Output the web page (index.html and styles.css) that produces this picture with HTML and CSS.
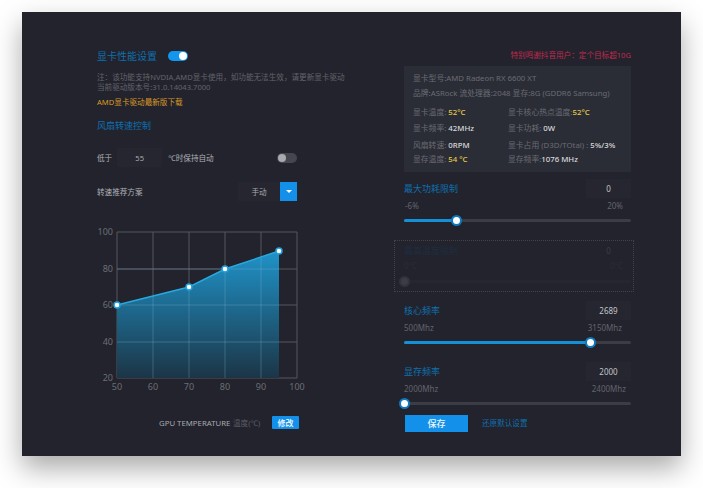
FILE: index.html
```html
<!DOCTYPE html>
<html lang="zh-CN">
<head>
<meta charset="utf-8">
<title>显卡性能设置</title>
<link rel="stylesheet" href="styles.css">
</head>
<body>
<main class="panel">
  <section class="left">
    <div class="title-row">
      <h1 class="heading heading-lg">显卡性能设置</h1>
      <span class="toggle toggle-on"></span>
    </div>
    <p class="note">注：该功能支持NVDIA,AMD显卡使用，如功能无法生效，请更新显卡驱动<br>当前驱动版本号:31.0.14043.7000</p>
    <a class="download">AMD显卡驱动最新版下载</a>
    <h2 class="heading fan-title">风扇转速控制</h2>
    <div class="row auto-row">
      <span class="row-label">低于</span>
      <span class="field field-temp">55</span>
      <span class="row-label">℃时保持自动</span>
      <span class="toggle toggle-off"></span>
    </div>
    <div class="row plan-row">
      <span class="row-label">转速推荐方案</span>
      <span class="select">
        <span class="select-value">手动</span>
        <span class="select-btn"><i class="caret"></i></span>
      </span>
    </div>
    <svg class="chart" width="210" height="170" viewBox="97 225 210 170">
      <defs>
        <linearGradient id="area" gradientUnits="userSpaceOnUse" x1="0" y1="251" x2="0" y2="378">
          <stop offset="0" stop-color="#1f93c9"/>
          <stop offset="1" stop-color="#1c3546"/>
        </linearGradient>
      </defs>
      <g class="grid">
        <path d="M117 232H297M117 269H297M117 305H297M117 342H297M117 378H297"/>
        <path d="M117 232V378M153 232V378M189 232V378M225 232V378M261 232V378M297 232V378"/>
      </g>
      <path class="area" d="M117 305L189 287L225 269L279 251V378H117Z"/>
      <g class="grid grid-over">
        <path d="M117 269H279M117 305H279M117 342H279"/>
        <path d="M153 296V378M189 287V378M225 269V378M261 258V378"/>
      </g>
      <path class="line" d="M117 305L189 287L225 269L279 251"/>
      <g class="dots">
        <circle cx="117" cy="305" r="3"/>
        <circle cx="189" cy="287" r="3"/>
        <circle cx="225" cy="269" r="3"/>
        <circle cx="279" cy="251" r="3"/>
      </g>
      <g class="ticks ticks-y">
        <text x="113" y="235">100</text>
        <text x="113" y="272">80</text>
        <text x="113" y="308">60</text>
        <text x="113" y="345">40</text>
        <text x="113" y="381">20</text>
      </g>
      <g class="ticks ticks-x">
        <text x="117" y="390">50</text>
        <text x="153" y="390">60</text>
        <text x="189" y="390">70</text>
        <text x="225" y="390">80</text>
        <text x="261" y="390">90</text>
        <text x="297" y="390">100</text>
      </g>
    </svg>
    <div class="chart-foot">
      <span class="axis-name">GPU TEMPERATURE</span>
      <span class="axis-unit">温度(℃)</span>
      <button class="edit-btn">修改</button>
    </div>
  </section>

  <section class="right">
    <p class="thanks">特别鸣谢抖音用户：定个目标超10G</p>
    <div class="info">
      <div class="info-row">显卡型号:AMD Radeon RX 6600 XT</div>
      <div class="info-row info-r2">品牌:ASRock 流处理器:2048 显存:8G (GDDR6 Samsung)</div>
      <div class="info-row info-cols info-r3"><span>显卡温度: <b class="warm">52°C</b></span><span>显卡核心热点温度:<b class="warm">52°C</b></span></div>
      <div class="info-row info-cols info-r4"><span>显卡频率: <b>42MHz</b></span><span>显卡功耗: <b>0W</b></span></div>
      <div class="info-row info-cols info-r5"><span>风扇转速: <b>0RPM</b></span><span>显卡占用 (D3D/TOtal) : <b>5%/3%</b></span></div>
      <div class="info-row info-cols"><span>显存温度: <b class="warm">54 °C</b></span><span>显存频率:<b>1076 MHz</b></span></div>
    </div>

    <div class="block block-power">
      <div class="block-head"><h3 class="heading">最大功耗限制</h3><span class="field field-num">0</span></div>
      <div class="limits limits-power"><span>-6%</span><span>20%</span></div>
      <div class="slider"><span class="fill" style="width:23%"></span><span class="thumb" style="left:23%"></span></div>
    </div>

    <div class="block block-disabled">
      <div class="disabled-inner">
        <div class="block-head"><h3 class="heading">最高温度限制</h3><span class="field field-num">0</span></div>
        <div class="limits limits-temp"><span>0°C</span><span>0°C</span></div>
        <div class="slider"><span class="thumb thumb-off" style="left:0"></span></div>
      </div>
    </div>

    <div class="block block-core">
      <div class="block-head"><h3 class="heading">核心频率</h3><span class="field field-num">2689</span></div>
      <div class="limits limits-core"><span>500Mhz</span><span>3150Mhz</span></div>
      <div class="slider"><span class="fill" style="width:82%"></span><span class="thumb" style="left:82%"></span></div>
    </div>

    <div class="block block-mem">
      <div class="block-head"><h3 class="heading">显存频率</h3><span class="field field-num">2000</span></div>
      <div class="limits limits-mem"><span>2000Mhz</span><span>2400Mhz</span></div>
      <div class="slider"><span class="thumb" style="left:0"></span></div>
    </div>

    <div class="actions">
      <button class="save-btn">保存</button>
      <a class="reset">还原默认设置</a>
    </div>
  </section>
</main>
</body>
</html>
```
FILE: styles.css
```css
* { box-sizing: border-box; }
html, body { margin: 0; height: 100%; background: #fff; }
body {
  overflow: hidden;
  font-family: "Noto Sans", "Noto Sans CJK SC", sans-serif;
  font-size: 7.6px;
  color: #8b8c92;
}
p, h1, h2, h3 { margin: 0; font-weight: 400; }
b { font-weight: 500; color: #d8d9dc; }
b.warm { color: #e8c84a; }

.panel {
  display: flex;
  width: 659px;
  height: 444px;
  margin: 12px 0 0 22px;
  padding-left: 75px;
  background: #22232d;
  box-shadow: 0 12px 26px rgba(0, 0, 0, .34);
}

.left { width: 210px; padding-top: 34px; }
.right { width: 227px; margin-left: 97px; padding-top: 37px; }

.heading { font-size: 9px; line-height: 14px; color: #0f70ae; }
.heading-lg { font-size: 10px; }

.title-row { display: flex; align-items: center; height: 20px; gap: 11px; }

.toggle {
  position: relative;
  display: block;
  width: 20px;
  height: 10px;
  border-radius: 5px;
}
.toggle::after {
  content: "";
  position: absolute;
  top: 1px;
  width: 8px;
  height: 8px;
  border-radius: 50%;
}
.toggle-on { background: #1296ee; }
.toggle-on::after { right: 1px; background: #fff; }
.toggle-off { margin-left: auto; margin-right: 10px; background: #45464e; }
.toggle-off::after { left: 1px; background: #a9aab0; }

.note { margin-top: 6px; width: 260px; line-height: 10px; color: #62636b; white-space: nowrap; }
.download { display: block; margin-top: 4px; line-height: 12px; color: #d99a26; }
.fan-title { margin-top: 11px; }

.row { display: flex; align-items: center; height: 19px; margin-top: 15px; }
.row-label { color: #b0b1b6; }
.plan-row { justify-content: space-between; padding-right: 10px; }

.field {
  display: flex;
  align-items: center;
  justify-content: center;
  height: 19px;
  background: #25262f;
  color: #a9aab0;
}
.field-temp { width: 45px; margin: 0 6px 0 5px; }
.field-num { width: 45px; font-size: 8px; color: #c4c5c9; }

.select { display: flex; width: 59px; height: 19px; background: #25262f; }
.select-value { flex: 1; display: flex; align-items: center; justify-content: center; color: #a9aab0; }
.select-btn { display: flex; align-items: center; justify-content: center; width: 17px; background: #1390ea; }
.caret { width: 0; height: 0; border: 3px solid transparent; border-top: 3px solid #fff; border-bottom: 0; }

.chart { display: block; margin-top: 24px; }
.grid path { fill: none; stroke: #55565c; stroke-width: 1; }
.grid-over path { stroke: #7db4cf; stroke-opacity: .32; }
.area { fill: url(#area); }
.line { fill: none; stroke: #27a9e0; stroke-width: 1.5; }
.dots circle { fill: #fff; stroke: #1e9fe0; stroke-width: 1.5; }
.ticks text { font-family: "Noto Sans", sans-serif; font-size: 9px; fill: #6d6e74; }
.ticks-y text { text-anchor: end; }
.ticks-x text { text-anchor: middle; }

.chart-foot { display: flex; align-items: center; height: 13px; margin-top: 21px; padding-left: 62px; white-space: nowrap; }
.axis-name { width: 72px; font-size: 7.8px; color: #a9aab0; }
.axis-unit { width: 29px; margin-left: 2px; color: #5c5d65; }
.edit-btn {
  margin-left: 10px;
  width: 27px;
  height: 13px;
  padding: 0;
  border: 0;
  border-radius: 1px;
  background: #1390ea;
  color: #fff;
  font: 500 8px/13px "Noto Sans CJK SC", sans-serif;
}

.thanks { line-height: 12px; text-align: right; color: #c02a4e; }

.info { height: 106px; margin-top: 5px; padding: 5px 0 0 9px; background: #2a2d36; font-size: 7.8px; color: #6a6b73; }
.info-row { line-height: 14px; white-space: nowrap; }
.info-r2 { margin-top: 1px; }
.info-r3 { margin-top: 5px; }
.info-r4 { margin-top: 2px; }
.info-r5 { margin-top: 3px; }
.info-cols { display: grid; grid-template-columns: 95px 1fr; }

.block-power { margin-top: 7px; }
.block-disabled {
  height: 52px;
  margin: 14px -3px 0 -10px;
  padding-left: 9px;
  padding-right: 2px;
  border: 1px dotted #41424a;
}
.disabled-inner { opacity: .14; }
.block-core { margin-top: 9px; }
.block-mem { margin-top: 14px; }

.block-head { display: flex; align-items: center; justify-content: space-between; height: 19px; }

.limits { display: flex; justify-content: space-between; height: 12px; margin-top: 2px; font-size: 8px; line-height: 12px; color: #63646c; }
.limits-power { padding: 0 8px 0 1px; }
.limits-temp { padding: 0 8px 0 0; margin-top: 0; }
.limits-core { padding-right: 9px; }
.limits-mem { padding-right: 5px; }

.slider { position: relative; height: 12px; margin-top: 2px; }
.block-disabled .slider { margin-top: 3px; }
.slider::before {
  content: "";
  position: absolute;
  left: 0;
  right: 0;
  top: 5px;
  height: 3px;
  border-radius: 2px;
  background: #3b3d46;
}
.fill { position: absolute; left: 0; top: 5px; height: 3px; border-radius: 2px; background: #1390d8; }
.thumb {
  position: absolute;
  top: 1px;
  width: 11px;
  height: 11px;
  margin-left: -5px;
  border: 2px solid #0f79bd;
  border-radius: 50%;
  background: #fff;
}
.thumb-off { border-color: #8a8b92; background: #d0d1d6; }

.actions { display: flex; align-items: center; margin-top: 6px; }
.save-btn {
  width: 63px;
  height: 17px;
  padding: 0;
  border: 0;
  margin-left: 1px;
  background: #1390ea;
  color: #e8f4fd;
  font: 500 9px/17px "Noto Sans CJK SC", sans-serif;
}
.reset { margin: 0 0 0 14px; color: #0f70ae; line-height: 17px; }
```
